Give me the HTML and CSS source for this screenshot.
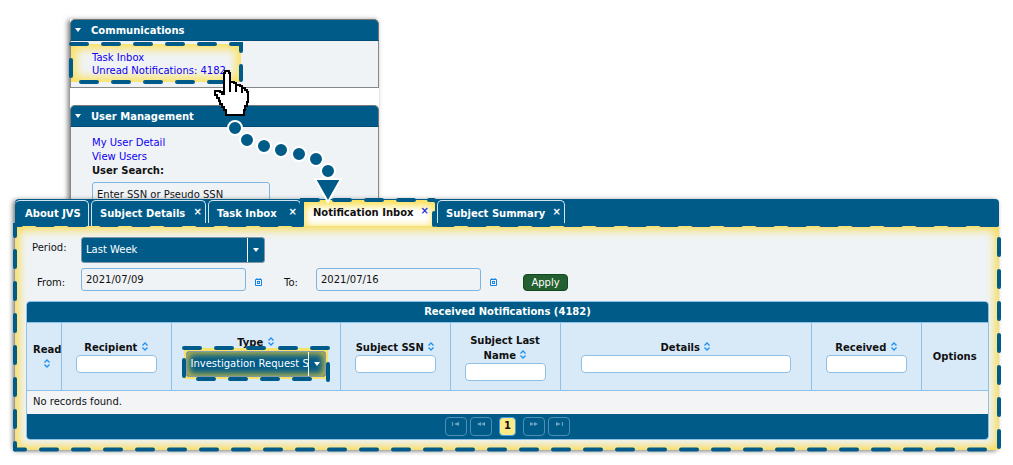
FILE: index.html
```html
<!DOCTYPE html>
<html lang="en">
<head>
<meta charset="utf-8">
<title>Notification Inbox</title>
<link rel="stylesheet" href="styles.css">
</head>
<body>
<svg class="symbols" aria-hidden="true">
  <symbol id="sort" viewBox="0 0 6 9"><path d="M0.5 3.5L3 1L5.5 3.5M0.5 5.5L3 8L5.5 5.5" fill="none" stroke="#1e90f0" stroke-width="1.3"/></symbol>
  <symbol id="calendar" viewBox="0 0 7 8"><path d="M0.5 1.5H6.5V7.5H0.5ZM2 0V2M5 0V2" fill="none" stroke="#1583e8"/><path d="M2 3H5V6H2Z" fill="#1583e8"/><path d="M3 4H4V5H3Z" fill="#fff"/></symbol>
</svg>
<main class="page">
  <aside class="sidebar">
    <section class="panel">
      <h2 class="panel-title">Communications</h2>
      <div class="panel-body panel-body-inbox">
        <a href="#">Task Inbox</a>
        <a href="#">Unread Notifications: 4182</a>
        <div class="callout callout-inbox">
          <svg class="dashes" aria-hidden="true">
            <line x1="0" y1="0" x2="158" y2="0"/>
            <path class="solid" d="M160 0H170V7M170 22V36"/>
            <line x1="10" y1="38" x2="156" y2="38"/>
            <line x1="0" y1="16" x2="0" y2="32"/>
          </svg>
        </div>
      </div>
    </section>
    <section class="panel">
      <h2 class="panel-title">User Management</h2>
      <div class="panel-body panel-body-users">
        <a href="#">My User Detail</a>
        <a href="#">View Users</a>
        <label class="search-label" for="user-search">User Search:</label>
        <input class="search-input" id="user-search" type="text" value="Enter SSN or Pseudo SSN">
      </div>
    </section>
  </aside>

  <section class="window">
    <nav class="tabs">
      <button class="tab tab-about" type="button">About JVS</button>
      <button class="tab tab-details" type="button">Subject Details<span class="close">×</span></button>
      <button class="tab tab-tasks" type="button">Task Inbox<span class="close">×</span></button>
      <button class="tab tab-active" type="button">Notification Inbox<span class="close">×</span></button>
      <button class="tab tab-summary" type="button">Subject Summary<span class="close">×</span></button>
    </nav>
    <div class="content">
      <form class="filters">
        <div class="filter-row">
          <label class="filter-label" for="period">Period:</label>
          <span class="dropdown dropdown-period"><select id="period"><option>Last Week</option></select></span>
        </div>
        <div class="filter-row filter-row-dates">
          <label class="filter-label" for="from">From:</label>
          <input class="date" id="from" type="text" value="2021/07/09">
          <svg class="calendar"><use href="#calendar"/></svg>
          <label class="to-label" for="to">To:</label>
          <input class="date" id="to" type="text" value="2021/07/16">
          <svg class="calendar"><use href="#calendar"/></svg>
          <button class="apply" type="button">Apply</button>
        </div>
      </form>
      <div class="grid">
        <table class="records">
          <caption>Received Notifications (4182)</caption>
          <colgroup>
            <col class="col-read"><col class="col-mid"><col class="col-type"><col class="col-mid"><col class="col-mid"><col><col class="col-mid"><col class="col-options">
          </colgroup>
          <thead>
            <tr>
              <th class="read">Read <svg class="sort"><use href="#sort"/></svg></th>
              <th>Recipient <svg class="sort"><use href="#sort"/></svg><input class="cell-filter" type="text" aria-label="Recipient"></th>
              <th>Type <svg class="sort"><use href="#sort"/></svg>
                <span class="type-box">
                  <span class="dropdown dropdown-type"><select aria-label="Type"><option>Investigation Request Status</option></select></span>
                  <svg class="dashes" aria-hidden="true">
                    <line x1="0" y1="0" x2="144" y2="0"/>
                    <line x1="14" y1="31" x2="126" y2="31"/>
                    <line x1="0" y1="12" x2="0" y2="28"/>
                    <line x1="144" y1="16" x2="144" y2="32"/>
                  </svg>
                </span>
              </th>
              <th>Subject SSN <svg class="sort"><use href="#sort"/></svg><input class="cell-filter" type="text" aria-label="Subject SSN"></th>
              <th>Subject Last Name <svg class="sort"><use href="#sort"/></svg><input class="cell-filter" type="text" aria-label="Subject Last Name"></th>
              <th>Details <svg class="sort"><use href="#sort"/></svg><input class="cell-filter cell-filter-wide" type="text" aria-label="Details"></th>
              <th>Received <svg class="sort"><use href="#sort"/></svg><input class="cell-filter" type="text" aria-label="Received"></th>
              <th>Options</th>
            </tr>
          </thead>
          <tbody><tr><td colspan="8">No records found.</td></tr></tbody>
        </table>
        <div class="pager">
          <button type="button" aria-label="First"><svg viewBox="0 0 8 6"><path d="M0 1H1V5H0ZM7 1V5L2 3Z"/></svg></button>
          <button type="button" aria-label="Previous"><svg viewBox="0 0 8 6"><path d="M4 1V5L0 3ZM8 1V5L4 3Z"/></svg></button>
          <button class="current" type="button">1</button>
          <button type="button" aria-label="Next"><svg viewBox="0 0 8 6"><path d="M0 1V5L4 3ZM4 1V5L8 3Z"/></svg></button>
          <button type="button" aria-label="Last"><svg viewBox="0 0 8 6"><path d="M7 1H8V5H7ZM1 1V5L6 3Z"/></svg></button>
        </div>
      </div>
    </div>
    <svg class="dashes" aria-hidden="true">
      <path class="solid" d="M0 37V26H6"/>
      <line x1="22" y1="26" x2="287" y2="26"/>
      <path class="solid" d="M287 26V1H303M414 1H419M419 14V26"/>
      <line x1="319" y1="1" x2="400" y2="1"/>
      <line x1="422" y1="26" x2="100%" y2="26"/>
      <line x1="0" y1="52" x2="0" y2="100%"/>
      <line x1="100%" y1="40" x2="100%" y2="100%"/>
      <line x1="0" y1="100%" x2="10" y2="100%"/>
      <line x1="26" y1="100%" x2="99%" y2="100%"/>
    </svg>
  </section>

  <svg class="pointer-trail" viewBox="0 0 130 135" aria-hidden="true">
    <g fill="#005b88" stroke="#fff" stroke-width="2">
      <circle cx="23" cy="60" r="7"/><circle cx="35" cy="72" r="7"/><circle cx="52" cy="78" r="7"/><circle cx="69" cy="82" r="7"/><circle cx="87" cy="86" r="7"/><circle cx="104" cy="91" r="7"/><circle cx="116" cy="103" r="7"/>
      <path d="M103 111H129L116 134Z"/>
    </g>
    <g stroke="#000" stroke-width="2" shape-rendering="crispEdges">
      <path d="M12 26V5H13V3H17V5H18V14H22V15H24V17H28V18H30V20H33V22H35V24H36V34H35V38H33V42H32V47H14V42H12V39H10V36H8V33H7V30H5V27H3V23H8V24H10V26Z" fill="#fff"/>
      <path d="M18 14V24M24 16V24M30 19V25"/>
    </g>
  </svg>
</main>
</body>
</html>
```
FILE: styles.css
```css
* { box-sizing: border-box; }
body { margin: 0; background: #fff; color: #111; font: 10px/14px "DejaVu Sans", sans-serif; }
button, input, select { font: inherit; color: inherit; margin: 0; }
a { color: #0d00f0; text-decoration: none; }
.symbols { display: none; }

.page { position: relative; padding: 19px 14px 15px 15px; }
.sidebar { width: 309px; margin-left: 55px; background: #fff; box-shadow: -2px 1px 5px #777; }
.panel + .panel { margin-top: 17px; }
.panel-title { position: relative; margin: 0; height: 22px; padding: 0 20px; border: 1px solid #777; border-bottom: 1px solid #004b78; border-radius: 5px 5px 0 0; background: #005b88; color: #fff; font-size: 10px; line-height: 22px; }
.panel-title::before { content: ""; position: absolute; left: 4px; top: 8px; border: 3px solid transparent; border-top: 4px solid #fff; border-bottom: 0; }
.panel-body { position: relative; display: flex; flex-direction: column; align-items: flex-start; border: 1px solid #888; border-top: 0; background: #f0f3f6; padding-left: 21px; }
.panel-body > a { position: relative; z-index: 1; }
.panel-body-inbox { padding-top: 10px; padding-bottom: 10px; line-height: 13px; }
.panel-body-users { padding-top: 9px; }
.search-label { font-weight: bold; margin-bottom: 4px; }
.search-input { width: 178px; height: 24px; border: 1px solid #7db5e0; border-radius: 3px; background: #f0f3f6; padding: 0 4px; }

.callout { position: absolute; box-shadow: inset 0 0 10px 5px #fbe15c; }
.callout-inbox { left: 0; top: 3px; width: 170px; height: 38px; }
.dashes { position: absolute; left: 0; top: 0; width: 100%; height: 100%; overflow: visible; pointer-events: none; fill: none; stroke: #005b88; stroke-width: 4; stroke-linecap: round; stroke-dasharray: 16 16; }
.dashes .solid { stroke-dasharray: none; }

.window { position: relative; z-index: 2; margin-top: -8px; border-radius: 4px; box-shadow: -2px 1px 5px #777; }
.tabs { display: flex; gap: 2px; height: 27px; background: #005b88; border-radius: 4px 4px 0 0; }
.tab { display: flex; align-items: center; height: 26px; margin-top: 1px; padding: 0 3px 0 8px; border: 1px solid #d5e4ee; border-bottom: 0; border-radius: 5px 5px 0 0; background: #005b88; color: #fff; font-weight: bold; white-space: nowrap; }
.tab-about { min-width: 74px; padding-left: 10px; border-left: 0; }
.tab-details { min-width: 115px; }
.tab-tasks { min-width: 93px; }
.tab-summary { min-width: 128px; }
.tab-active { min-width: 132px; padding: 0 6px 0 10px; background: #fff; color: #111; border: 0; box-shadow: inset 0 3px 7px 3px #fbe15c; }
.close { margin: -4px 0 0 auto; padding-left: 4px; }
.tab-active .close { color: #2330d8; }

.content { padding: 11px 10px 10px 11px; background: #f0f3f6; box-shadow: inset 0 0 10px 4px #f7dc52; }
.filters { display: flex; flex-direction: column; gap: 5px; margin-bottom: 10px; }
.filter-row { display: flex; align-items: center; }
.filter-label { width: 55px; padding: 0 0 4px 6px; }
.filter-row-dates .filter-label { padding: 6px 0 0 11px; }
.date { width: 165px; height: 23px; border: 1px solid #7db5e0; border-radius: 3px; background: #f0f3f6; padding: 0 4px; }
.calendar { width: 7px; height: 8px; margin: 4px 0 0 9px; }
.to-label { margin-left: 22px; width: 32px; padding-top: 6px; }
.apply { margin: 6px 0 0 26px; height: 17px; width: 45px; padding: 0; border: 1px solid #0e4a1e; border-radius: 4px; background: #235f31; color: #fff; }

.dropdown { position: relative; display: block; height: 26px; border: 1px solid #8497a8; border-radius: 3px; background: #005b88; color: #fff; }
.dropdown::after { content: ""; position: absolute; right: 5px; top: 10px; border: 3px solid transparent; border-top: 4px solid #fff; border-bottom: 0; pointer-events: none; }
.dropdown::before { content: ""; position: absolute; right: 16px; top: 0; bottom: 0; width: 1px; background: #fff; }
.dropdown select { display: block; width: 100%; height: 100%; appearance: none; border: 0; background: none; padding: 0 17px 0 4px; }
.dropdown-period { width: 184px; }

.grid { border: 1px solid #8fc1e8; border-radius: 4px; overflow: hidden; }
.records { width: 100%; border-collapse: collapse; table-layout: fixed; }
.records caption { height: 20px; line-height: 20px; background: #005b88; color: #fff; font-weight: bold; }
.col-read { width: 34px; }
.col-mid { width: 110px; }
.col-type { width: 169px; }
.col-options { width: 67px; }
.records th { height: 68px; padding: 0 8px; background: #d8eaf8; border: 1px solid #8fc1e8; vertical-align: middle; line-height: 15px; }
.records th:first-child { border-left: 0; }
.records th:last-child { border-right: 0; }
.records th.read { padding: 0 0 0 6px; }
.sort { width: 6px; height: 9px; margin-left: 1px; }
.cell-filter { display: block; width: 81px; height: 18px; margin: 0 auto; border: 1px solid #8fbfe5; border-radius: 4px; background: #fff; }
.cell-filter-wide { width: 210px; }
.type-box { position: relative; display: block; width: 144px; height: 31px; margin: -2px auto 0; padding: 3px 2px 2px; background: #f7e266; }
.dropdown-type { box-shadow: inset 0 0 7px 2px #c9bd45; font-weight: normal; }
.records td { height: 23px; padding: 0 6px; background: #f2f4f6; }
.pager { display: flex; justify-content: center; align-items: center; gap: 3px; height: 25px; background: #005b88; }
.pager button { width: 22px; height: 19px; padding: 0; border: 1px solid #4f8fb5; border-radius: 4px; background: transparent; }
.pager svg { display: block; width: 8px; height: 6px; margin: -4px auto 0; fill: #6fa3c2; }
.pager .current { width: 17px; margin: 0 4px; border-color: #3f9ce8; background: #fdec85; font-weight: bold; }

.pointer-trail { position: absolute; z-index: 3; left: 212px; top: 68px; width: 130px; height: 135px; pointer-events: none; }
```
